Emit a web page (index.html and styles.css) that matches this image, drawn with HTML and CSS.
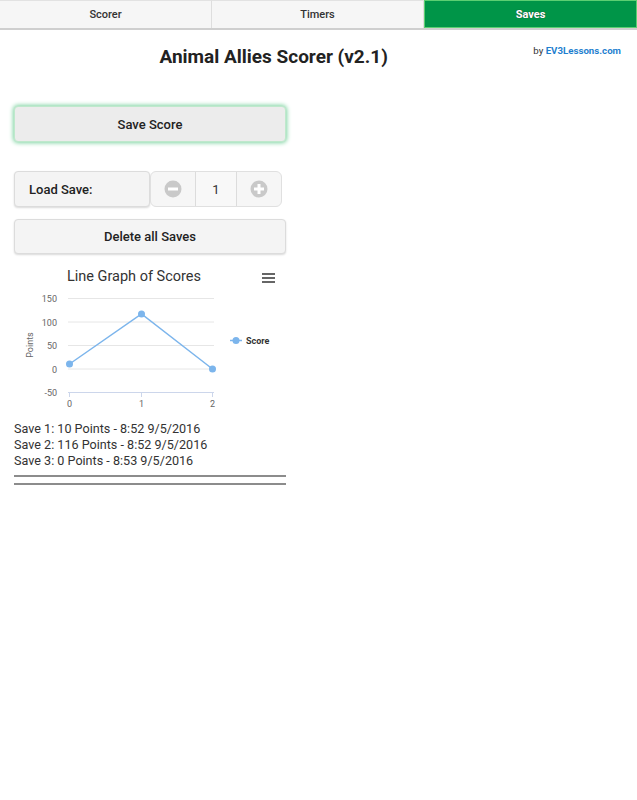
FILE: index.html
```html
<!DOCTYPE html>
<html>
<head>
<meta charset="utf-8">
<link rel="stylesheet" href="styles.css">
</head>
<body>
<nav class="tabs">
  <div class="tab">Scorer</div>
  <div class="tab">Timers</div>
  <div class="tab active">Saves</div>
</nav>
<header class="header">
  <h1 class="title">Animal Allies Scorer (v2.1)</h1>
  <div class="credit">by <a class="credit-link">EV3Lessons.com</a></div>
</header>
<main class="content">
  <button class="btn btn-save">Save Score</button>
  <div class="load-row">
    <div class="load-label">Load Save:</div>
    <div class="spinner">
      <div class="spin-btn">
        <svg width="18" height="18" viewBox="0 0 18 18"><circle cx="9" cy="9" r="8.5" fill="#c9c9c9"/><rect x="4" y="7.5" width="10" height="3" fill="#fff"/></svg>
      </div>
      <div class="spin-value">1</div>
      <div class="spin-btn">
        <svg width="18" height="18" viewBox="0 0 18 18"><circle cx="9" cy="9" r="8.5" fill="#c9c9c9"/><rect x="4" y="7.5" width="10" height="3" fill="#fff"/><rect x="7.5" y="4" width="3" height="10" fill="#fff"/></svg>
      </div>
    </div>
  </div>
  <button class="btn btn-delete">Delete all Saves</button>
  <div class="chart">
    <svg width="272" height="152" viewBox="0 0 272 152">
      <text x="120" y="19" text-anchor="middle" class="c-title">Line Graph of Scores</text>
      <rect x="248" y="11" width="13" height="2" fill="#666"/>
      <rect x="248" y="15" width="13" height="2" fill="#666"/>
      <rect x="248" y="19" width="13" height="2" fill="#666"/>
      <g stroke="#e6e6e6" stroke-width="1">
        <line x1="54" y1="36.5" x2="200" y2="36.5"/>
        <line x1="54" y1="60" x2="200" y2="60"/>
        <line x1="54" y1="83.5" x2="200" y2="83.5"/>
        <line x1="54" y1="107" x2="200" y2="107"/>
      </g>
      <g stroke="#ccd6eb" stroke-width="1">
        <line x1="54" y1="130.5" x2="200" y2="130.5"/>
        <line x1="55.5" y1="130" x2="55.5" y2="135"/>
        <line x1="127.5" y1="130" x2="127.5" y2="135"/>
        <line x1="198.5" y1="130" x2="198.5" y2="135"/>
      </g>
      <g class="c-axis" text-anchor="end">
        <text x="43" y="40">150</text>
        <text x="43" y="63.5">100</text>
        <text x="43" y="87">50</text>
        <text x="43" y="110.5">0</text>
        <text x="43" y="134">-50</text>
      </g>
      <g class="c-axis" text-anchor="middle">
        <text x="55.5" y="145">0</text>
        <text x="127.5" y="145">1</text>
        <text x="198.5" y="145">2</text>
      </g>
      <text class="c-axis" transform="translate(19 83) rotate(-90)" text-anchor="middle">Points</text>
      <polyline points="55.5,102 127.5,52 198.5,107" fill="none" stroke="#7cb5ec" stroke-width="1.5"/>
      <g fill="#7cb5ec">
        <circle cx="55.5" cy="102" r="3.5"/>
        <circle cx="127.5" cy="52" r="3.5"/>
        <circle cx="198.5" cy="107" r="3.5"/>
      </g>
      <line x1="216" y1="78.5" x2="228" y2="78.5" stroke="#7cb5ec" stroke-width="1.5"/>
      <circle cx="222" cy="78.5" r="3.5" fill="#7cb5ec"/>
      <text x="232" y="82" class="c-legend">Score</text>
    </svg>
  </div>
  <div class="saves">
    <div>Save 1: 10 Points - 8:52 9/5/2016</div>
    <div>Save 2: 116 Points - 8:52 9/5/2016</div>
    <div>Save 3: 0 Points - 8:53 9/5/2016</div>
  </div>
  <hr class="rule">
  <hr class="rule">
</main>
</body>
</html>
```

FILE: styles.css
```css
html, body {
  margin: 0;
  padding: 0;
  background: #fff;
  font-family: Roboto, "Liberation Sans", sans-serif;
  color: #222;
}

.tabs {
  display: flex;
  height: 28px;
  border-bottom: 2px solid #cfcfcf;
}

.tab {
  flex: 1;
  display: flex;
  align-items: center;
  justify-content: center;
  background: #f6f6f6;
  border-right: 1px solid #dedede;
  border-top: 1px solid #e2e2e2;
  font-size: 11px;
  font-weight: 500;
  color: #333;
}

.tab.active {
  background: #009548;
  border: 1px solid #5ccf72;
  color: #fff;
  font-weight: 700;
  text-shadow: 0 0 1px #333;
}

.header {
  display: flex;
  align-items: flex-start;
  padding: 0 16px 0 14px;
}

.title {
  flex: 1;
  margin: 13px 0 0;
  text-align: center;
  font-size: 19px;
  font-weight: 700;
  color: #222;
  line-height: 28px;
}

.credit {
  margin-top: 14px;
  font-size: 9.7px;
  color: #333;
  line-height: 14px;
}

.credit-link {
  color: #1f7fcf;
  font-weight: 700;
}

.content {
  width: 272px;
  margin-left: 14px;
  padding-top: 35px;
}

.btn {
  display: block;
  width: 272px;
  font-family: Roboto, "Liberation Sans", sans-serif;
  font-size: 13px;
  font-weight: 500;
  color: #222;
  border-radius: 4px;
  padding: 0;
}

.btn-save {
  height: 36px;
  background: #ececec;
  border: 1px solid #bfe8cc;
  box-shadow: 0 0 4px 1px #7fd4a2;
}

.load-row {
  display: flex;
  margin-top: 29px;
  height: 36px;
}

.load-label {
  width: 136px;
  box-sizing: border-box;
  display: flex;
  align-items: center;
  padding-left: 14px;
  background: #f4f4f4;
  border: 1px solid #dcdcdc;
  border-radius: 4px;
  box-shadow: 0 1px 2px rgba(0,0,0,0.15);
  font-size: 13px;
  font-weight: 500;
}

.spinner {
  display: flex;
  width: 132px;
  box-sizing: border-box;
  border: 1px solid #e0e0e0;
  border-radius: 6px;
  background: #f6f6f6;
}

.spin-btn {
  width: 45px;
  display: flex;
  align-items: center;
  justify-content: center;
}

.spin-value {
  width: 40px;
  display: flex;
  align-items: center;
  justify-content: center;
  background: #f8f8f8;
  border-left: 1px solid #dcdcdc;
  border-right: 1px solid #dcdcdc;
  font-size: 13px;
  color: #333;
}

.btn-delete {
  margin-top: 12px;
  height: 35px;
  background: #f4f4f4;
  border: 1px solid #dcdcdc;
  box-shadow: 0 1px 2px rgba(0,0,0,0.15);
}

.chart {
  margin-top: 8px;
  height: 152px;
}

.chart svg {
  display: block;
}

.c-title {
  font-family: Roboto, "Liberation Sans", sans-serif;
  font-size: 14.5px;
  fill: #333;
}

.c-axis {
  font-family: Roboto, "Liberation Sans", sans-serif;
  font-size: 9px;
  fill: #666;
}

.c-legend {
  font-family: Roboto, "Liberation Sans", sans-serif;
  font-size: 9px;
  font-weight: 700;
  fill: #333;
}

.saves {
  margin-top: 7px;
  font-size: 12.6px;
  line-height: 16px;
  color: #333;
}

.rule {
  margin: 6px 0 0;
  border: 0;
  border-top: 2px solid #8c8c8c;
  height: 0;
}
```
